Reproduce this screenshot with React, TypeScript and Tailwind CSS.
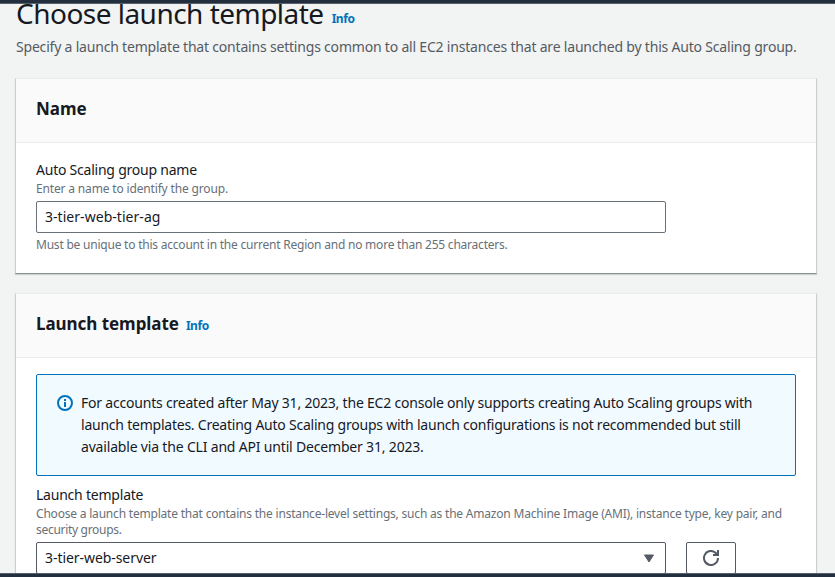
import React from "react";

function InfoLink({ className = "" }: { className?: string }) {
  return (
    <a className={`text-[12px] leading-4 font-bold tracking-[-0.45px] text-[#0073bb] whitespace-nowrap ${className}`}>Info</a>
  );
}

function Card({ title, info, className, children }: {
  title: string;
  info?: boolean;
  className: string;
  children: React.ReactNode;
}) {
  return (
    <section className={`mx-[15px] w-[802px] shrink-0 border border-t-[#eaeded] border-x-[#c9cfcf] border-b-[#879191] bg-white shadow-[0_1px_1px_0_rgba(0,28,36,0.15)] ${className}`}>
      <header className="flex h-[64px] items-center border-b border-[#eaeded] bg-[#fafafa] pl-5 pb-[3px]">
        <h2 className="text-[17px] leading-[22px] font-bold tracking-[-0.05px] whitespace-nowrap">{title}</h2>
        {info && <InfoLink className="ml-[7px] mt-[4px]" />}
      </header>
      <div className="px-5">{children}</div>
    </section>
  );
}

export default function App() {
  return (
    <div className="flex h-[577px] w-[835px] flex-col overflow-hidden bg-[#f2f3f3] font-['Noto_Sans','Open_Sans',sans-serif] text-[#16191f]">
      <div className="h-1 shrink-0 border-b border-[#56616c] bg-[#232f3e]" />
      <main className="flex h-[569px] shrink-0 flex-col overflow-hidden">
        <div className="-mt-[9px] flex h-[36px] shrink-0 items-center pl-4">
          <h1 className="text-[28px] leading-[36px] tracking-[-0.52px] whitespace-nowrap">Choose launch template</h1>
          <InfoLink className="ml-2 mt-[11px]" />
        </div>
        <p className="mt-[5px] h-[22px] shrink-0 pl-4 text-[14px] leading-[22px] tracking-[-0.195px] whitespace-nowrap text-[#545b64]">
          Specify a launch template that contains settings common to all EC2 instances that are launched by this Auto Scaling group.
        </p>
        <Card title="Name" className="mt-5 h-[196px]">
          <div className="mt-4 text-[14px] leading-[22px] tracking-[-0.23px]">Auto Scaling group name</div>
          <div className="text-[12px] leading-4 tracking-[-0.16px] text-[#687078]">Enter a name to identify the group.</div>
          <div className="mt-1 flex h-8 w-[630px] items-center rounded-[2px] border border-[#687078] bg-white px-2 text-[14px] leading-[22px] tracking-[0.04px]">
            <span>3-tier-web-tier-ag</span>
          </div>
          <div className="mt-1 text-[12px] leading-4 tracking-[-0.22px] text-[#687078]">
            Must be unique to this account in the current Region and no more than 255 characters.
          </div>
        </Card>
        <Card title="Launch template" info className="mt-[19px] h-[340px]">
          <div className="mt-4 flex h-[102px] rounded-[2px] border border-[#0073bb] bg-[#f1faff] pt-[17px] pl-5">
            <svg className="mt-[3px] h-4 w-4 shrink-0" viewBox="0 0 16 16" fill="none" stroke="#0073bb" strokeWidth="2">
              <circle cx="8" cy="8" r="7" />
              <path d="M8 7v5M8 4v2" />
            </svg>
            <p className="ml-2 text-[14px] leading-[22px] whitespace-nowrap">
              <span className="block tracking-[-0.205px]">For accounts created after May 31, 2023, the EC2 console only supports creating Auto Scaling groups with</span>
              <span className="block tracking-[-0.23px]">launch templates. Creating Auto Scaling groups with launch configurations is not recommended but still</span>
              <span className="block tracking-[-0.18px]">available via the CLI and API until December 31, 2023.</span>
            </p>
          </div>
          <div className="mt-2 text-[14px] leading-[22px] tracking-[-0.22px]">Launch template</div>
          <div className="text-[12px] leading-4 tracking-[-0.2px] whitespace-nowrap text-[#687078]">
            <span className="block">Choose a launch template that contains the instance-level settings, such as the Amazon Machine Image (AMI), instance type, key pair, and</span>
            <span className="block tracking-[-0.3px]">security groups.</span>
          </div>
          <div className="mt-1 flex gap-5">
            <div className="flex h-8 w-[630px] items-center justify-between rounded-[2px] border border-[#545b64] pr-[10px] pl-2 text-[14px] leading-[22px]">
              <span className="tracking-[-0.06px]">3-tier-web-server</span>
              <svg className="h-[9px] w-[12px]" viewBox="0 0 12 9" fill="#545b64"><path d="M1.5 1h9L6 8z" stroke="#545b64" strokeLinejoin="round" /></svg>
            </div>
            <div className="flex h-8 w-[50px] items-center justify-center rounded-[2px] border border-[#545b64]">
              <svg className="h-4 w-4" viewBox="0 0 16 16" fill="none" stroke="#545b64" strokeWidth="2">
                <path d="M15 8a7 7 0 1 1-2.2-5.1L15 5" />
                <path d="M10 5h5V0" />
              </svg>
            </div>
          </div>
        </Card>
      </main>
      <div className="h-1 shrink-0 border-t border-[#56616c] bg-[#232f3e]" />
    </div>
  );
}
